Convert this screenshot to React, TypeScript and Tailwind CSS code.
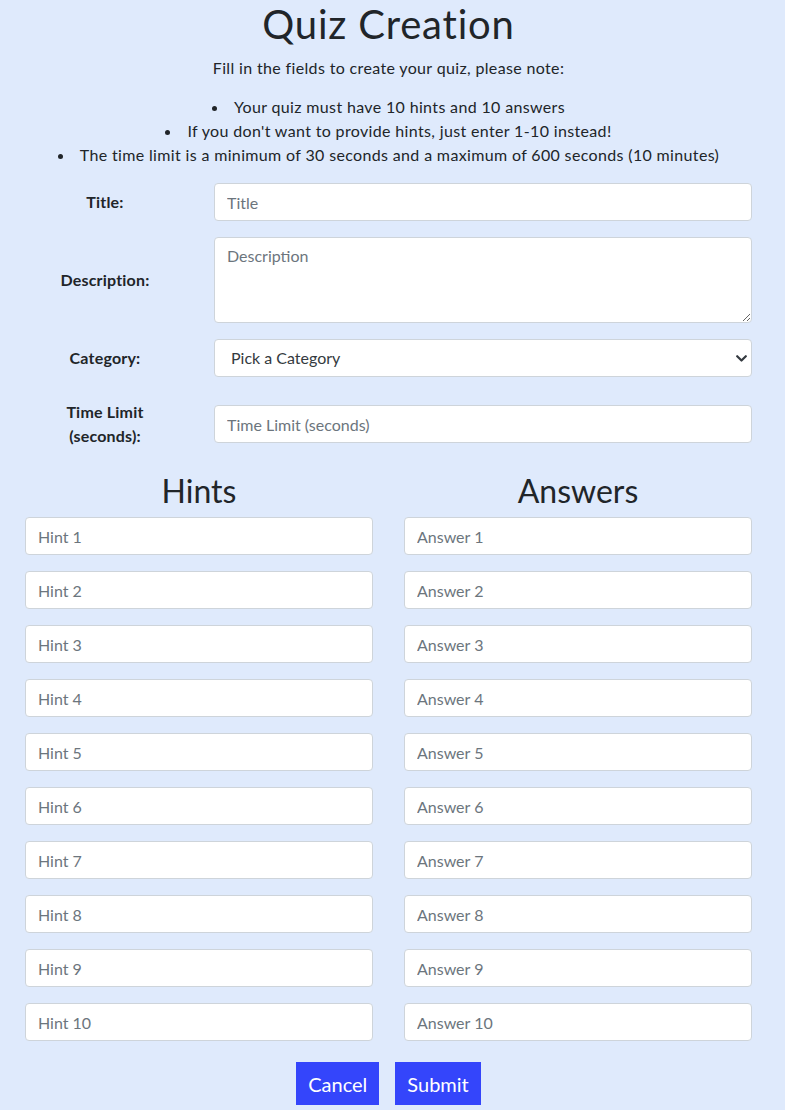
import React from "react"

const inputCls =
  "block w-full h-[38px] rounded border border-[#ced4da] bg-white px-3 text-[16px] text-[#212529] placeholder:text-[#6c757d] outline-none"

function Row({ label, children, className = "" }: { label: React.ReactNode; children: React.ReactNode; className?: string }) {
  return (
    <div className={"flex items-center " + className}>
      <label className="w-[160px] shrink-0 px-4 text-center text-[16px] font-bold leading-6 tracking-[0.2px] text-[#212529]">{label}</label>
      <div className="ml-[29px] flex-1">{children}</div>
    </div>
  )
}

export default function App() {
  const nums = [1, 2, 3, 4, 5, 6, 7, 8, 9, 10]
  return (
    <div className="min-h-[1110px] w-full bg-[#dfeafc] pl-[25px] pr-[33px] text-[#212529]" style={{ fontFamily: "Lato, 'Open Sans', sans-serif" }}>
      <h1 className="text-center text-[40px] leading-[48px] tracking-[0.8px]">Quiz Creation</h1>
      <p className="mt-2 text-center text-[16px] leading-6 tracking-[0.35px]">Fill in the fields to create your quiz, please note:</p>
      <ul className="mt-[15px] list-inside list-disc text-center text-[16px] leading-6 tracking-[0.35px]">
        <li>Your quiz must have 10 hints and 10 answers</li>
        <li>If you don't want to provide hints, just enter 1-10 instead!</li>
        <li>The time limit is a minimum of 30 seconds and a maximum of 600 seconds (10 minutes)</li>
      </ul>

      <div className="mt-4">
        <Row label="Title:">
          <input className={inputCls} placeholder="Title" />
        </Row>
        <Row label="Description:" className="mt-4">
          <textarea className="block h-[86px] w-full rounded border border-[#ced4da] bg-white px-3 py-[6px] text-[16px] placeholder:text-[#6c757d] outline-none" placeholder="Description" />
        </Row>
        <Row label="Category:" className="mt-4">
          <div className="relative">
            <select className="block h-[38px] w-full appearance-none rounded border border-[#ced4da] bg-white pl-4 pr-9 text-[16px] text-[#343a40] outline-none" defaultValue="">
              <option value="">Pick a Category</option>
            </select>
            <svg className="pointer-events-none absolute right-[5px] top-[16px]" width="11" height="7" viewBox="0 0 11 7" fill="none">
              <path d="M1.2 1.2 5.5 5.5 9.8 1.2" stroke="#343a40" strokeWidth="2.2" strokeLinecap="round" strokeLinejoin="round" />
            </svg>
          </div>
        </Row>
        <Row label={<>Time Limit<br />(seconds):</>} className="mt-[23px]">
          <input className={inputCls} placeholder="Time Limit (seconds)" />
        </Row>
      </div>

      <div className="mt-6 grid grid-cols-2 gap-x-[31px]">
        <div>
          <h2 className="text-center text-[32px] leading-[38px]">Hints</h2>
          <div className="mt-[7px] flex flex-col gap-4">
            {nums.map((n) => (
              <input key={n} className={inputCls} placeholder={"Hint " + n} />
            ))}
          </div>
        </div>
        <div>
          <h2 className="text-center text-[32px] leading-[38px]">Answers</h2>
          <div className="mt-[7px] flex flex-col gap-4">
            {nums.map((n) => (
              <input key={n} className={inputCls} placeholder={"Answer " + n} />
            ))}
          </div>
        </div>
      </div>

      <div className="mt-[21px] flex justify-center gap-4 pb-1">
        <button className="h-[43px] bg-[#3445fb] px-3 text-[20px] text-white">Cancel</button>
        <button className="h-[43px] bg-[#3445fb] px-3 text-[20px] text-white">Submit</button>
      </div>
    </div>
  )
}
